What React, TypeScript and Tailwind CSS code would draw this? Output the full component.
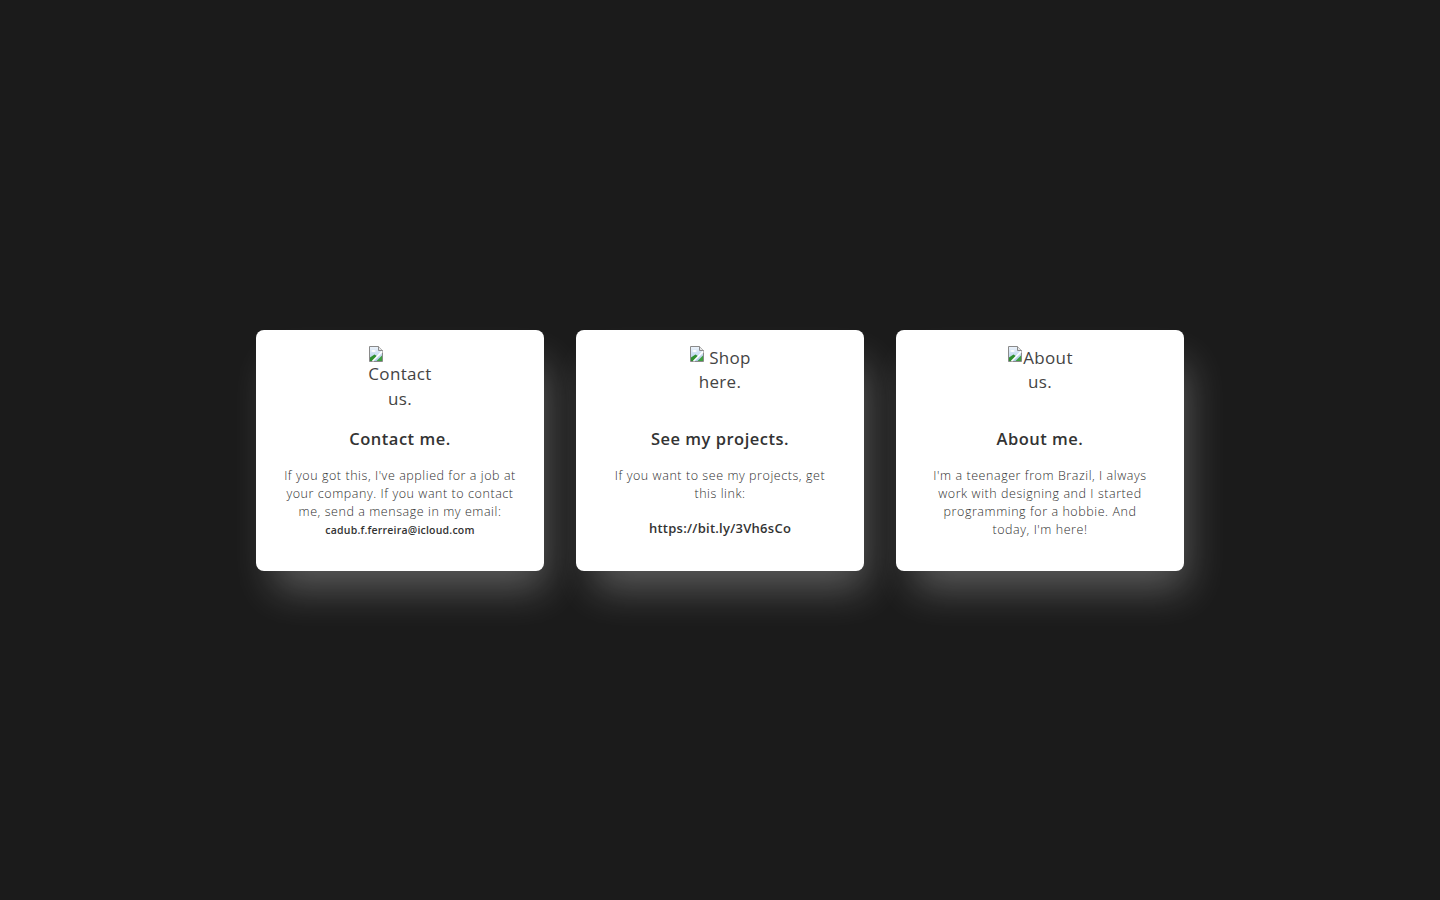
import React from "react";

function BrokenImage() {
  return (
    <svg width="16" height="16" viewBox="0 0 16 16" className="block shrink-0">
      <defs>
        <linearGradient id="sky" x1="0" y1="0" x2="0" y2="1">
          <stop offset="0" stopColor="#eef4fb" />
          <stop offset="1" stopColor="#a9c8e8" />
        </linearGradient>
      </defs>
      <path d="M1.5 0.5h9l4 4v11h-13z" fill="url(#sky)" stroke="#8a8a8a" />
      <path d="M10.5 0.5v4h4" fill="#e6e6e6" stroke="#8a8a8a" />
      <ellipse cx="5.5" cy="5" rx="2.2" ry="1.1" fill="#fff" />
      <path d="M2 15v-3.5l4.5-3 3 2L5 15z" fill="#2f8f2f" />
      <path d="M8.5 15l5.5-5.5V15z" fill="#3fa03f" />
      <path d="M4.5 15.2l9.8-9.8" stroke="#fff" strokeWidth="1.6" />
    </svg>
  );
}

function Card({
  alt,
  layout,
  title,
  children,
}: {
  alt: string;
  layout: "stack" | "space" | "tight";
  title: string;
  children: React.ReactNode;
}) {
  const [first, second] = alt.split(" ");
  return (
    <div className="flex h-[241px] w-[288px] flex-col items-center rounded-lg bg-white px-6 pt-4 text-center shadow-[10px_26px_38px_-8px_rgba(255,255,255,0.28)]">
      <div className="h-[64px] w-[64px] text-[17px] leading-[25px] tracking-[0.02em] text-[#444]">
        {layout === "stack" ? (
          <div>
            <BrokenImage />
            <div className="mt-[-1px] flex justify-center whitespace-nowrap">{first}</div>
            <div>{second}</div>
          </div>
        ) : (
          <div className="-ml-[2px] w-[68px]">
            <div className="flex items-start justify-center whitespace-nowrap">
              <BrokenImage />
              {layout === "space" ? <span className="w-[4px]" /> : null}
              <span className="-mt-[1px]">{first}</span>
            </div>
            <div className="-mt-[1px]">{second}</div>
          </div>
        )}
      </div>
      <h2 className="mt-[16px] text-[16.5px] font-semibold leading-[25px] tracking-[0.03em] text-[#333]">
        {title}
      </h2>
      <div className="mt-[16px] text-[12.5px] font-light leading-[18px] tracking-[0.045em] text-[#2f2f2f]">
        {children}
      </div>
    </div>
  );
}

export default function App() {
  return (
    <div
      className="flex min-h-screen items-center justify-center gap-8 bg-[#1b1b1b]"
      style={{ fontFamily: "'Open Sans', 'Liberation Sans', sans-serif" }}
    >
      <Card alt="Contact us." layout="stack" title="Contact me.">
        <p>
          If you got this, I've applied for a job at your company. If you want to contact me, send a
          mensage in my email:
        </p>
        <p className="text-[10.5px] font-semibold tracking-[0.02em] text-[#333]">cadub.f.ferreira@icloud.com</p>
      </Card>
      <Card alt="Shop here." layout="space" title="See my projects.">
        <p className="px-3">If you want to see my projects, get this link:</p>
        <p className="mt-[16px] text-[13px] font-semibold tracking-[0.02em] text-[#333]">https://bit.ly/3Vh6sCo</p>
      </Card>
      <Card alt="About us." layout="tight" title="About me.">
        <p className="px-3">
          I'm a teenager from Brazil, I always work with designing and I started programming for a
          hobbie. And today, I'm here!
        </p>
      </Card>
    </div>
  );
}
